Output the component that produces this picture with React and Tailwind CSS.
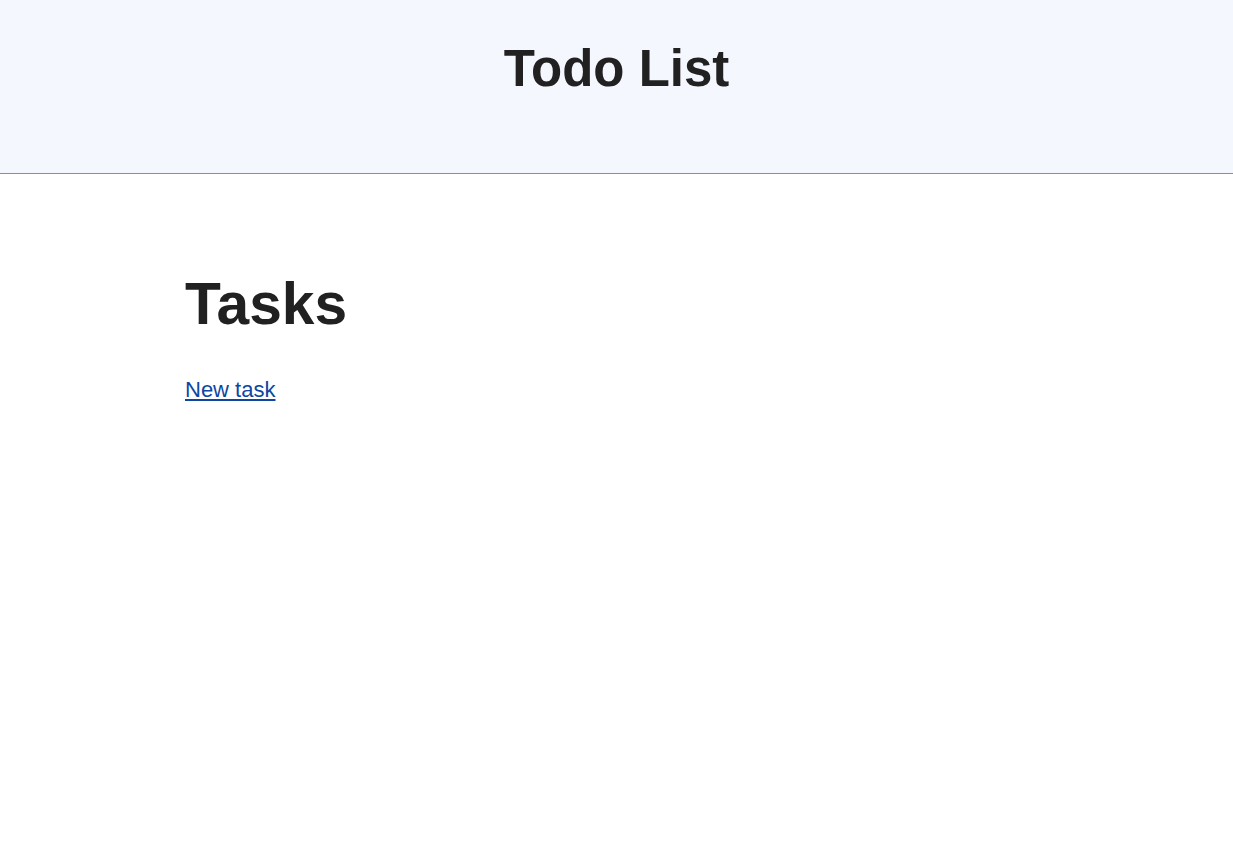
export default function App() {
  return (
    <div className="min-h-screen bg-white text-[#212121]" style={{ fontFamily: '"Liberation Sans", Arial, sans-serif' }}>
      <header className="h-[174px] bg-[#f5f7ff] border-b border-[#898ea4] pt-[39px]">
        <h1 className="text-center text-[51px] leading-[60px] font-bold">Todo List</h1>
      </header>
      <main className="mx-[185px] pt-[95px]">
        <h2 className="text-[58.7px] leading-[70px] font-bold">Tasks</h2>
        <div className="mt-[34px]">
          <a href="#" className="text-[22px] leading-[33px] text-[#0d47a1] underline">New task</a>
        </div>
      </main>
    </div>
  )
}
